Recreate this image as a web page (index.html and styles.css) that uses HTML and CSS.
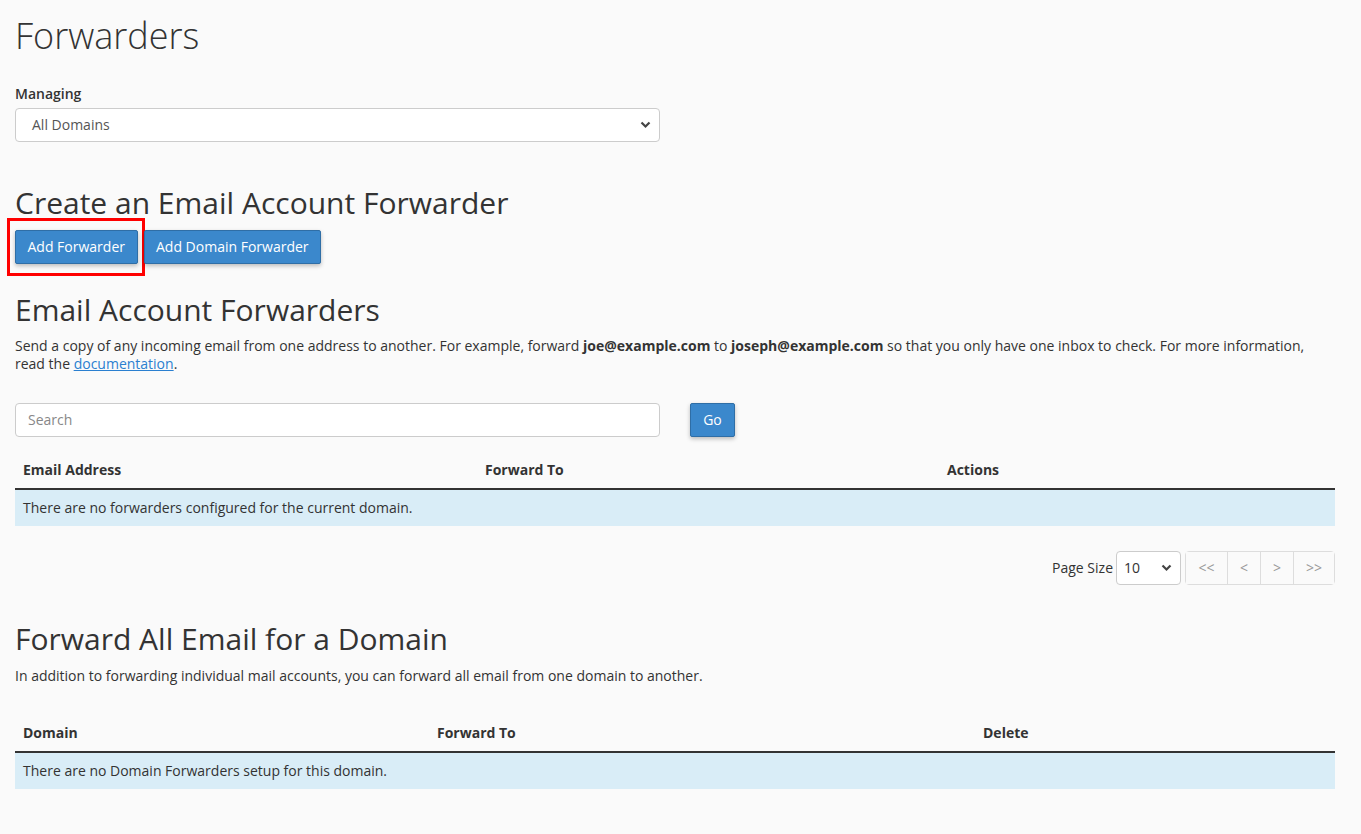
FILE: index.html
```html
<!DOCTYPE html>
<html>
<head>
<meta charset="utf-8">
<link rel="stylesheet" href="styles.css">
</head>
<body>
<div class="page">
  <h1 class="title">Forwarders</h1>

  <div class="managing">
    <label class="label">Managing</label>
    <div class="select wide">
      <span>All Domains</span>
      <svg class="chev" width="11" height="8" viewBox="0 0 11 8"><path d="M1.5 1.5 L5.5 5.5 L9.5 1.5" fill="none" stroke="#444" stroke-width="2.2"/></svg>
    </div>
  </div>

  <h2 class="h2 create">Create an Email Account Forwarder</h2>
  <div class="btn-row">
    <div class="highlight">
      <button class="btn">Add Forwarder</button>
    </div>
    <button class="btn btn-domain">Add Domain Forwarder</button>
  </div>

  <h2 class="h2 eaf">Email Account Forwarders</h2>
  <p class="desc">Send a copy of any incoming email from one address to another. For example, forward <b>joe@example.com</b> to <b>joseph@example.com</b> so that you only have one inbox to check. For more information, read the <a href="#">documentation</a>.</p>

  <div class="search-row">
    <div class="input"><span>Search</span></div>
    <button class="btn go">Go</button>
  </div>

  <table class="tbl t1">
    <thead>
      <tr><th class="c1">Email Address</th><th class="c2">Forward To</th><th>Actions</th></tr>
    </thead>
    <tbody>
      <tr class="info"><td colspan="3">There are no forwarders configured for the current domain.</td></tr>
    </tbody>
  </table>

  <div class="pager">
    <span class="ps-label">Page Size</span>
    <div class="select small">
      <span>10</span>
      <svg class="chev" width="11" height="8" viewBox="0 0 11 8"><path d="M1.5 1.5 L5.5 5.5 L9.5 1.5" fill="none" stroke="#444" stroke-width="2.2"/></svg>
    </div>
    <div class="pages">
      <span class="pg w1">&lt;&lt;</span><span class="pg">&lt;</span><span class="pg">&gt;</span><span class="pg w1">&gt;&gt;</span>
    </div>
  </div>

  <h2 class="h2 fae">Forward All Email for a Domain</h2>
  <p class="desc2">In addition to forwarding individual mail accounts, you can forward all email from one domain to another.</p>

  <table class="tbl t2">
    <thead>
      <tr><th class="d1">Domain</th><th class="d2">Forward To</th><th>Delete</th></tr>
    </thead>
    <tbody>
      <tr class="info"><td colspan="3">There are no Domain Forwarders setup for this domain.</td></tr>
    </tbody>
  </table>
</div>
</body>
</html>
```

FILE: styles.css
```css
* { box-sizing: border-box; }
html, body { margin: 0; padding: 0; background: #fafafa; }
body {
  font-family: "Open Sans", "Liberation Sans", sans-serif;
  font-size: 14px;
  line-height: 20px;
  color: #333;
}
.page { width: 1350px; padding: 0 15px; }
.page > * { max-width: 1320px; }

.title {
  font-size: 36px;
  font-weight: 300;
  line-height: 40px;
  margin: 16px 0 0;
}

.managing { margin-top: 28px; }
.label { display: block; font-weight: 600; line-height: 20px; margin-bottom: 4px; }

.select {
  display: flex;
  align-items: center;
  justify-content: space-between;
  height: 34px;
  background: #fff;
  border: 1px solid #ccc;
  border-radius: 4px;
  color: #555;
  padding: 0 8px 0 16px;
}
.select.wide { width: 645px; }
.select.small { width: 65px; padding: 0 8px 0 7px; color: #333; }

.h2 {
  font-size: 30px;
  font-weight: 400;
  line-height: 33px;
  margin: 0;
}
.create { margin-top: 44px; }

.btn-row { display: flex; align-items: center; margin-top: 11px; }
.highlight {
  margin: -12px 0 -12px -8px;
  padding: 9px 4px 9px 5px;
  border: 3px solid #f00;
}
.btn {
  font-family: inherit;
  font-size: 14px;
  line-height: 20px;
  height: 34px;
  padding: 0 11.5px;
  color: #fff;
  background: #3b88cc;
  border: 1px solid #2f6ea6;
  border-radius: 2px;
  box-shadow: 0 2px 4px rgba(0,0,0,0.25);
  cursor: pointer;
}
.btn-domain { margin-left: -1px; }

.eaf { margin-top: 29px; }
.desc { margin: 11px 0 0; line-height: 18px; }
.desc a { color: #2a7fd0; text-decoration: underline; }
.desc b { font-weight: 700; }

.search-row { display: flex; gap: 30px; margin-top: 30px; }
.input {
  width: 645px;
  height: 34px;
  background: #fff;
  border: 1px solid #ccc;
  border-radius: 4px;
  padding: 0 12px;
  display: flex;
  align-items: center;
  color: #888;
}
.go { width: 45px; padding: 0; }

.tbl { width: 1320px; border-collapse: collapse; }
.tbl th {
  text-align: left;
  font-weight: 700;
  padding: 7px 8px 8px;
  line-height: 20px;
  border-bottom: 2px solid #333;
}
.tbl td { padding: 8px; line-height: 20px; }
.tbl .info td { background: #d9edf7; }
.t1 { margin-top: 16px; }
.c1, .c2 { width: 462px; }
.d1 { width: 414px; }
.d2 { width: 546px; }

.pager { display: flex; justify-content: flex-end; align-items: center; margin-top: 25px; }
.ps-label { margin-right: 3px; }
.pages { display: flex; margin-left: 4px; border: 1px solid #ddd; border-radius: 4px; height: 34px; }
.pg {
  display: flex; align-items: center; justify-content: center;
  width: 33px; color: #999; border-left: 1px solid #ddd; background: #fafafa;
}
.pg:first-child { border-left: 0; }
.pg.w1 { width: 41px; }

.fae { margin-top: 37px; }
.desc2 { margin: 11px 0 0; }
.t2 { margin-top: 30px; }
```
